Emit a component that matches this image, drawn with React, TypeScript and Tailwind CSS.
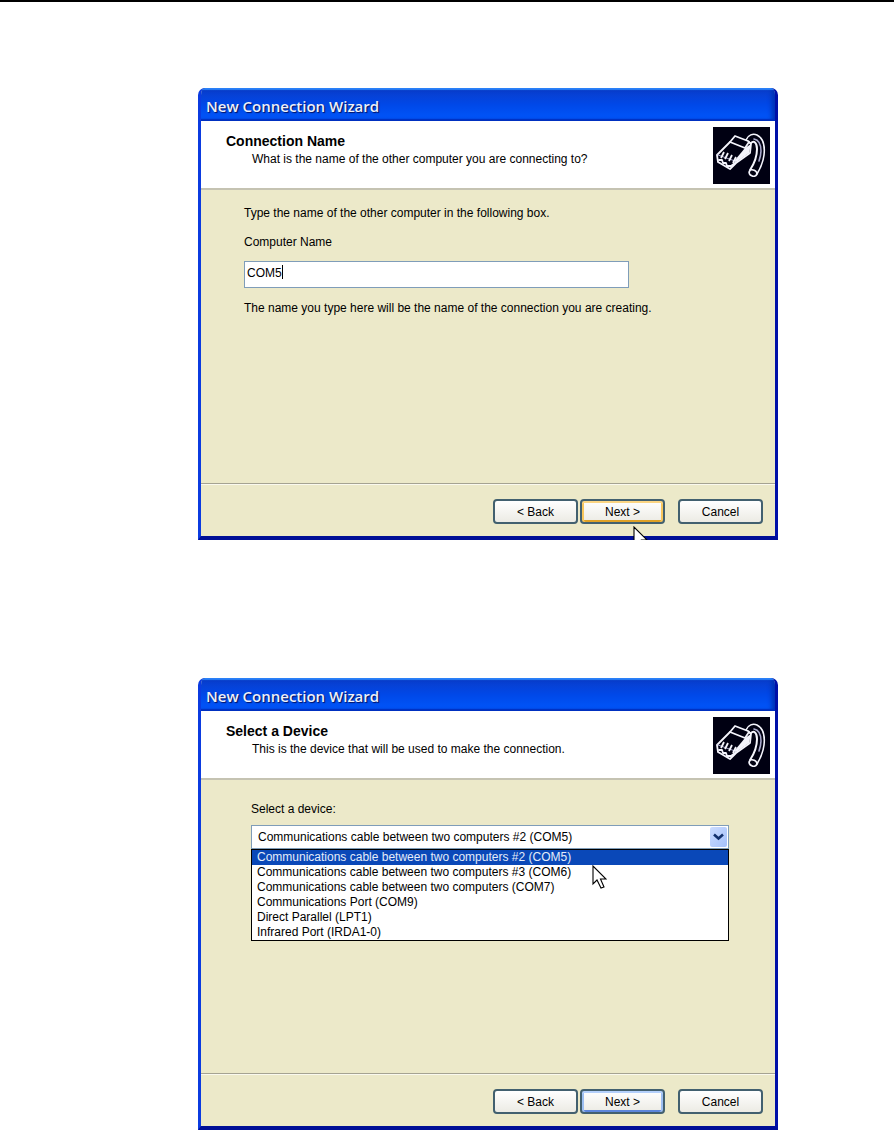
import * as React from "react"
import { useState } from "react"
import clsx from "clsx"

const devices = [
  "Communications cable between two computers #2 (COM5)",
  "Communications cable between two computers #3 (COM6)",
  "Communications cable between two computers (COM7)",
  "Communications Port (COM9)",
  "Direct Parallel (LPT1)",
  "Infrared Port (IRDA1-0)",
]

const PlugIcon = () => (
  <svg className="h-[57px] w-[57px] shrink-0" viewBox="0 0 57 57" fill="none" strokeLinecap="round" strokeLinejoin="round" aria-hidden="true">
    <rect width="57" height="57" fill="#000012" />
    {/* Cable */}
    <path d="M33 13C35 8 40 6 44 8C50 11 52 19 51 28C50 36 47 42 44 47" stroke="#f4f4fc" strokeWidth="1.600" />
    <path d="M38 16C41 13 44 16 44 22C44 30 41 37 37 43" stroke="#f4f4fc" strokeWidth="2" />
    <path d="M41 12C46 13 48 18 48 24C48 28 47 31 46 34" stroke="#a8a8cc" strokeWidth="1.600" />
    <ellipse cx="40" cy="46" rx="4" ry="3" transform="rotate(25 40 46)" fill="#000012" stroke="#f4f4fc" strokeWidth="1.800" />
    {/* Plug */}
    <path d="M22 9L35 14L38 17L37 26L23 36L17 42L5 35L4 28L17 15Z" fill="#000012" stroke="#f4f4fc" strokeWidth="1.800" />
    <path d="M17 15L32 21L36 15" stroke="#f4f4fc" strokeWidth="1.800" />
    <path d="M32 21L22 33L22 36L36 26L38 17Z" fill="#f4f4fc" />
    <path d="M5 28L22 34" stroke="#a8a8cc" strokeWidth="1" />
    <path d="M11 25L8 31M15 26L12 32M19 28L16 34M23 30L20 36" stroke="#f4f4fc" strokeWidth="1.800" strokeLinecap="butt" />
    <path d="M6 33L9 33L10 36L13 36L14 39L18 39L22 36" stroke="#f4f4fc" strokeWidth="1.800" />
  </svg>
)

const Pointer = ({ className }: { className: string }) => (
  <svg className={clsx("pointer-events-none absolute", className)} width="15" height="25" viewBox="0 0 15 25" aria-hidden="true">
    <path d="M1 1V19L5 15L9 23L12 22L8.500 14H14Z" fill="#fff" stroke="#000" strokeWidth="1.1" />
  </svg>
)

type Highlight = "none" | "hover" | "default"

const WizardButton = ({ children, highlight = "none" }: { children: React.ReactNode; highlight?: Highlight }) => (
  <button
    type="button"
    className={clsx(
      "h-[25px] w-[85px] rounded-[4px] border-2 border-[#42606f] bg-linear-to-b from-white to-[#ecebe4] leading-4 text-black",
      highlight === "hover" && "shadow-[inset_0_2px_0_#fbd583,inset_2px_0_0_#f8c65c,inset_-2px_0_0_#f8c65c,inset_0_-2px_0_#dfa126]",
      highlight === "default" && "shadow-[inset_0_2px_0_#b4d0fb,inset_2px_0_0_#9dbff2,inset_-2px_0_0_#9dbff2,inset_0_-2px_0_#5c86dc]"
    )}
  >
    {children}
  </button>
)

interface WizardWindowProps {
  heading: string
  subheading: string
  highlight: Highlight
  children: React.ReactNode
  pointer?: React.ReactNode
}

const WizardWindow = ({ heading, subheading, highlight, children, pointer }: WizardWindowProps) => (
  <section className="relative overflow-hidden">
    <div className="flex min-h-[452px] flex-col overflow-hidden rounded-t-[7px] border-x-3 border-b-4 border-l-[#0b3be0] border-r-[#0010a8] border-b-[#000f96] bg-[#ece9c9]">
      <div className="-mx-[3px] flex h-[33px] items-center bg-linear-to-b from-[#0a3cc8] via-[#0048e8] to-[#0058fc] px-2 pt-0.5 shadow-[inset_0_2px_1px_#2a80f8,inset_0_-2px_1px_#0030c0,inset_-6px_0_5px_#0030b0]">
        <h1 className="font-['Open_Sans','Noto_Sans',sans-serif] text-[15px] leading-5 font-semibold text-[#eef0f8] [text-shadow:1px_1px_1px_#001060]">
          New Connection Wizard
        </h1>
      </div>
      <header className="flex h-[67px] items-start justify-between bg-white pt-[6px] pr-[5px] pl-[25px]">
        <div className="pt-[6px]">
          <h2 className="text-[14px] leading-4 font-bold">{heading}</h2>
          <p className="pl-[26px] leading-5">{subheading}</p>
        </div>
        <PlugIcon />
      </header>
      <div className="flex-1 border-t-2 border-[#c5c3b2] pr-[46px] pl-[43px]">{children}</div>
      <footer className="flex h-[53px] items-start justify-end border-t border-[#a5a392] pt-[15px] pr-3 shadow-[inset_0_1px_0_#faf9ee]">
        <div className="mr-[13px] flex gap-0.5">
          <WizardButton>&lt; Back</WizardButton>
          <WizardButton highlight={highlight}>Next &gt;</WizardButton>
        </div>
        <WizardButton>Cancel</WizardButton>
      </footer>
    </div>
    {pointer}
  </section>
)

const ConnectionName = () => {
  const [name, setName] = useState("COM5")

  return (
    <WizardWindow
      heading="Connection Name"
      subheading="What is the name of the other computer you are connecting to?"
      highlight="hover"
      pointer={<Pointer className="right-[130px] -bottom-[11px]" />}
    >
      <p className="pt-[15px] leading-4">Type the name of the other computer in the following box.</p>
      <label htmlFor="computer-name" className="block pt-[13px] leading-4">
        Computer Name
      </label>
      <div className="relative mt-[11px] max-w-[385px]">
        <input
          id="computer-name"
          value={name}
          onChange={(e) => setName(e.target.value)}
          className="block h-[27px] w-full border border-[#7f9db9] bg-white px-0.5 pb-1 outline-none"
        />
        {/* Caret */}
        <span className="absolute top-1 left-[38px] h-[14px] w-px bg-black" />
      </div>
      <p className="pt-3 leading-4">The name you type here will be the name of the connection you are creating.</p>
    </WizardWindow>
  )
}

const SelectDevice = () => {
  const [device, setDevice] = useState(devices[0])

  return (
    <WizardWindow
      heading="Select a Device"
      subheading="This is the device that will be used to make the connection."
      highlight="default"
    >
      <div className="pt-[21px] pl-[7px]">
        <label htmlFor="device" className="block leading-4">
          Select a device:
        </label>
        <div className="relative mt-2">
          <select
            id="device"
            value={device}
            onChange={(e) => setDevice(e.target.value)}
            className="block h-6 w-full appearance-none border border-[#7f9db9] bg-white pr-6 pl-[6px] outline-none"
          >
            {devices.map((item) => (
              <option key={item}>{item}</option>
            ))}
          </select>
          <span className="pointer-events-none absolute top-0.5 right-0.5 flex h-5 w-[17px] items-center justify-center rounded-xs bg-linear-to-br from-[#cbdcff] to-[#a4c0fa]">
            <svg width="11" height="8" viewBox="0 0 11 8" fill="none" aria-hidden="true">
              <path d="M1 1.500L5.500 5.500L10 1.500" stroke="#12306c" strokeWidth="2.600" />
            </svg>
          </span>
          {/* Open list */}
          <ul role="listbox" aria-label="Select a device" className="absolute inset-x-0 top-6 border border-black bg-white">
            {devices.map((item) => (
              <li
                key={item}
                role="option"
                aria-selected={item === device}
                onClick={() => setDevice(item)}
                className={clsx("pl-[5px] leading-[15px]", item === device && "bg-[#0a48b8] text-[#e4ecf8]")}
              >
                {item}
              </li>
            ))}
          </ul>
          <Pointer className="top-10 left-[341px]" />
        </div>
      </div>
    </WizardWindow>
  )
}

const App = () => {
  return (
    <main className="min-h-screen border-t-2 border-black bg-white pt-[86px] pr-[116px] pl-[198px] font-['Liberation_Sans',Arial,sans-serif] text-xs text-black">
      <div className="flex flex-col gap-[138px]">
        <ConnectionName />
        <SelectDevice />
      </div>
    </main>
  )
}

export default App
